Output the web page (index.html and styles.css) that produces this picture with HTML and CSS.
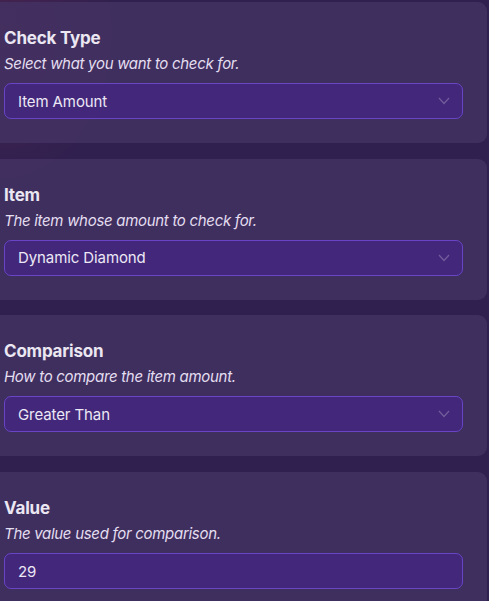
FILE: index.html
```html
<!DOCTYPE html>
<html>
<head>
<meta charset="utf-8">
<link rel="stylesheet" href="styles.css">
</head>
<body>
<div class="page">
  <section class="card">
    <h2 class="title">Check Type</h2>
    <p class="desc">Select what you want to check for.</p>
    <div class="field">
      <span class="value">Item Amount</span>
      <svg class="chev" width="12" height="8" viewBox="0 0 12 8"><path d="M1 1 L6 6.5 L11 1" fill="none" stroke="#745d9c" stroke-width="1.2"/></svg>
    </div>
  </section>
  <section class="card">
    <h2 class="title">Item</h2>
    <p class="desc">The item whose amount to check for.</p>
    <div class="field">
      <span class="value">Dynamic Diamond</span>
      <svg class="chev" width="12" height="8" viewBox="0 0 12 8"><path d="M1 1 L6 6.5 L11 1" fill="none" stroke="#745d9c" stroke-width="1.2"/></svg>
    </div>
  </section>
  <section class="card">
    <h2 class="title">Comparison</h2>
    <p class="desc">How to compare the item amount.</p>
    <div class="field">
      <span class="value">Greater Than</span>
      <svg class="chev" width="12" height="8" viewBox="0 0 12 8"><path d="M1 1 L6 6.5 L11 1" fill="none" stroke="#745d9c" stroke-width="1.2"/></svg>
    </div>
  </section>
  <section class="card">
    <h2 class="title">Value</h2>
    <p class="desc">The value used for comparison.</p>
    <div class="field">
      <span class="value">29</span>
    </div>
  </section>
</div>
</body>
</html>
```

FILE: styles.css
```css
html, body {
  margin: 0;
  padding: 0;
  height: 100%;
  overflow: hidden;
}
body {
  background:
    radial-gradient(ellipse 120px 160px at 0px 30px, rgba(110, 40, 80, 0.35), transparent),
    #30204f;
  font-family: Inter, "Noto Sans", sans-serif;
  color: #ece8f4;
}
.page {
  display: flex;
  flex-direction: column;
  gap: 15.7px;
  padding-top: 2px;
  margin-left: -13px;
  margin-right: 2px;
}
.card {
  background: rgba(68, 51, 99, 0.8);
  border-radius: 9px;
  padding: 26px 24px 24px 17px;
  height: 141px;
  box-sizing: border-box;
}
.title {
  margin: 0;
  font-size: 17px;
  line-height: 20px;
  font-weight: 700;
  color: #ebe7f2;
  letter-spacing: -0.2px;
}
.desc {
  margin: 7px 0 0;
  font-size: 15px;
  line-height: 18px;
  font-style: italic;
  color: #e4def0;
  letter-spacing: -0.3px;
}
.field {
  margin-top: 10px;
  height: 36px;
  box-sizing: border-box;
  border: 1px solid #6945c6;
  border-radius: 7px;
  background: #42277a;
  display: flex;
  align-items: center;
  justify-content: space-between;
  padding: 0 12px 0 13px;
}
.value {
  font-size: 15px;
  color: #ece8f5;
  letter-spacing: -0.1px;
}
.chev {
  display: block;
}
```
